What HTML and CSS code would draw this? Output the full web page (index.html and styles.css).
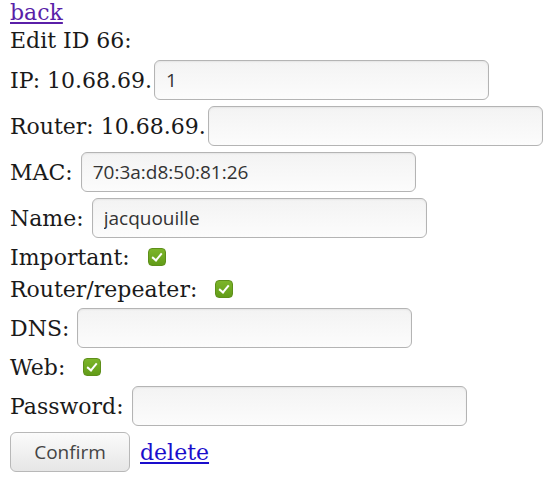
FILE: index.html
```html
<!DOCTYPE html>
<html>
<head>
<meta charset="utf-8">
<link rel="stylesheet" href="styles.css">
</head>
<body>
<div class="page">
  <div class="line back-line"><a class="link back" href="#">back</a></div>
  <div class="line title">Edit ID 66:</div>
  <form class="form">
    <div class="row"><span class="label">IP: 10.68.69.</span><input class="field tight" type="text" value="1"></div>
    <div class="row"><span class="label">Router: 10.68.69.</span><input class="field tight" type="text" value=""></div>
    <div class="row"><span class="label">MAC:</span><input class="field gap" type="text" value="70:3a:d8:50:81:26"></div>
    <div class="row"><span class="label">Name:</span><input class="field gap" type="text" value="jacquouille"></div>
    <div class="row check-row"><span class="label">Important:</span><input class="check" type="checkbox" checked></div>
    <div class="row check-row"><span class="label">Router/repeater:</span><input class="check" type="checkbox" checked></div>
    <div class="row"><span class="label">DNS:</span><input class="field gap" type="text" value=""></div>
    <div class="row check-row"><span class="label">Web:</span><input class="check" type="checkbox" checked></div>
    <div class="row"><span class="label">Password:</span><input class="field gap" type="password" value=""></div>
    <div class="row"><button class="btn" type="button">Confirm</button><a class="link delete" href="#">delete</a></div>
  </form>
</div>
</body>
</html>
```
FILE: styles.css
```css
html, body {
  margin: 0;
  padding: 0;
  background: #ffffff;
}
body {
  font-family: "DejaVu Serif", serif;
  font-size: 22px;
  color: #1a1a1a;
}
.page {
  padding: 0 0 0 10px;
}
.line {
  height: 26px;
  line-height: 26px;
}
.back-line {
  margin-bottom: 2px;
}
.title {
  margin-bottom: 6px;
}
.link {
  color: #5a1fa8;
  text-decoration: underline;
}
.delete {
  color: #1a0dcc;
  margin-left: 10px;
}
.form {
  display: flex;
  flex-direction: column;
  gap: 6px;
  margin: 0;
}
.row {
  display: flex;
  align-items: center;
  height: 40px;
  white-space: pre;
}
.check-row {
  height: 26px;
}
.field {
  box-sizing: border-box;
  width: 335px;
  height: 40px;
  margin: 0;
  padding: 0 11px;
  border: 1px solid #b4b4b4;
  border-radius: 6px;
  background: linear-gradient(#f3f3f3, #fcfcfc);
  font-family: "Open Sans", sans-serif;
  font-size: 19px;
  color: #333;
  box-shadow: inset 0 1px 2px rgba(0,0,0,0.06);
}
.field.tight {
  margin-left: 2px;
}
.field.gap {
  margin-left: 8px;
}
.check {
  -webkit-appearance: none;
  appearance: none;
  position: relative;
  box-sizing: border-box;
  width: 18px;
  height: 18px;
  margin: 0 0 0 18px;
  border: 1px solid #5e8f1a;
  border-radius: 4px;
  background: linear-gradient(#7cb52a, #629c18);
}
.check::after {
  content: "";
  position: absolute;
  left: 5px;
  top: 2px;
  width: 4px;
  height: 8px;
  border: solid #ffffff;
  border-width: 0 2px 2px 0;
  transform: rotate(40deg);
}
.btn {
  box-sizing: border-box;
  width: 120px;
  height: 40px;
  margin: 0;
  border: 1px solid #b8b8b8;
  border-radius: 6px;
  background: linear-gradient(#fbfbfb, #e6e6e6);
  font-family: "Open Sans", sans-serif;
  font-size: 19px;
  color: #444;
}
```
